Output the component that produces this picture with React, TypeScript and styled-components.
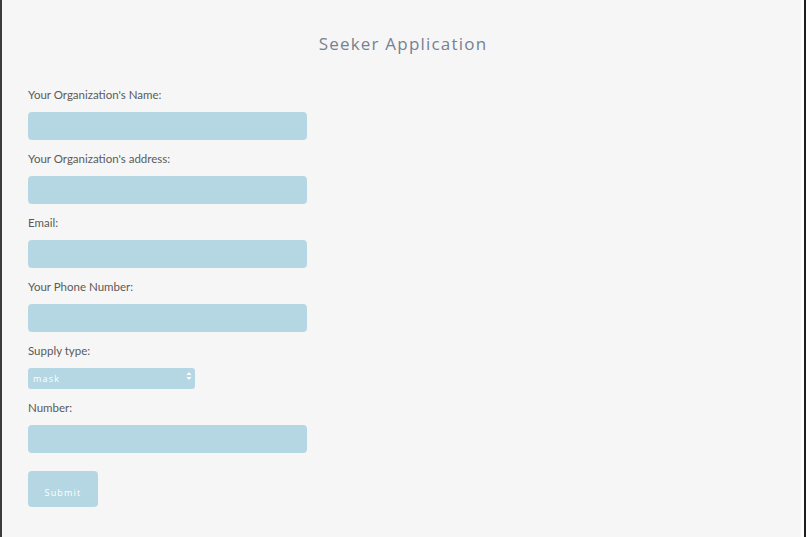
import styled, { createGlobalStyle } from 'styled-components';

const GlobalStyle = createGlobalStyle`
  html, body {
    margin: 0;
    padding: 0;
    background: #f6f6f6;
  }
  * {
    box-sizing: border-box;
  }
`;

const fields = [
  { id: 'orgName', label: "Your Organization's Name:" },
  { id: 'orgAddress', label: "Your Organization's address:" },
  { id: 'email', label: 'Email:' },
  { id: 'phone', label: 'Your Phone Number:' },
];

export default function App() {
  return (
    <>
      <GlobalStyle />
      <Frame>
        <Title>Seeker Application</Title>
        <Form onSubmit={(e) => e.preventDefault()}>
          {fields.map((f) => (
            <Field key={f.id}>
              <Label htmlFor={f.id}>{f.label}</Label>
              <Input id={f.id} type="text" />
            </Field>
          ))}
          <Field>
            <Label htmlFor="supply">Supply type:</Label>
            <SelectWrap>
              <Select id="supply" defaultValue="mask">
                <option value="mask">mask</option>
                <option value="gloves">gloves</option>
                <option value="gown">gown</option>
              </Select>
              <Arrows width="6" height="10" viewBox="0 0 6 10">
                <path d="M0.5 4 L3 1 L5.5 4 Z" fill="#ffffff" />
                <path d="M0.5 6 L3 9 L5.5 6 Z" fill="#ffffff" />
              </Arrows>
            </SelectWrap>
          </Field>
          <Field>
            <Label htmlFor="number">Number:</Label>
            <Input id="number" type="text" />
          </Field>
          <SubmitButton type="submit">Submit</SubmitButton>
        </Form>
      </Frame>
    </>
  );
}

const Frame = styled.div`
  min-height: 537px;
  padding: 30px 0 0 28px;
  border-left: 2px solid #3c3c3c;
  border-right: 2px solid #1e1e1e;
  box-shadow: inset -3px 0 0 #ffffff;
  background: #f6f6f6;
  font-family: 'Open Sans', 'Noto Sans', sans-serif;
`;

const Title = styled.h1`
  margin: 0 0 29px -28px;
  text-align: center;
  font-size: 17px;
  line-height: 28px;
  font-weight: 400;
  letter-spacing: 1.2px;
  color: #778192;
`;

const Form = styled.form`
  display: flex;
  flex-direction: column;
  align-items: flex-start;
  margin-left: -2px;
`;

const Field = styled.div`
  display: flex;
  flex-direction: column;
  margin-bottom: 11px;
`;

const Label = styled.label`
  font-family: Lato, 'Open Sans', sans-serif;
  font-size: 11.5px;
  line-height: 16px;
  color: #5a5a5a;
  margin-bottom: 9px;
`;

const Input = styled.input`
  width: 279px;
  height: 28px;
  border: none;
  border-radius: 4px;
  background: #b5d7e3;
  outline: none;
`;

const SelectWrap = styled.div`
  position: relative;
  width: 167px;
  height: 21px;
  margin: -3px 0 3px;
`;

const Select = styled.select`
  width: 100%;
  height: 100%;
  appearance: none;
  border: none;
  border-radius: 3px;
  padding: 0 5px;
  background: #b5d7e3;
  color: #ffffff;
  font-family: 'Open Sans', sans-serif;
  font-size: 9px;
  letter-spacing: 1.2px;
  outline: none;
`;

const Arrows = styled.svg`
  position: absolute;
  right: 3px;
  top: 6px;
`;

const SubmitButton = styled.button`
  margin-top: 7px;
  width: 70px;
  height: 36px;
  border: none;
  border-radius: 4px;
  background: #b5d7e3;
  color: #ffffff;
  font-family: 'Open Sans', sans-serif;
  font-size: 9px;
  letter-spacing: 1.2px;
  padding-top: 8px;
  cursor: pointer;
`;
